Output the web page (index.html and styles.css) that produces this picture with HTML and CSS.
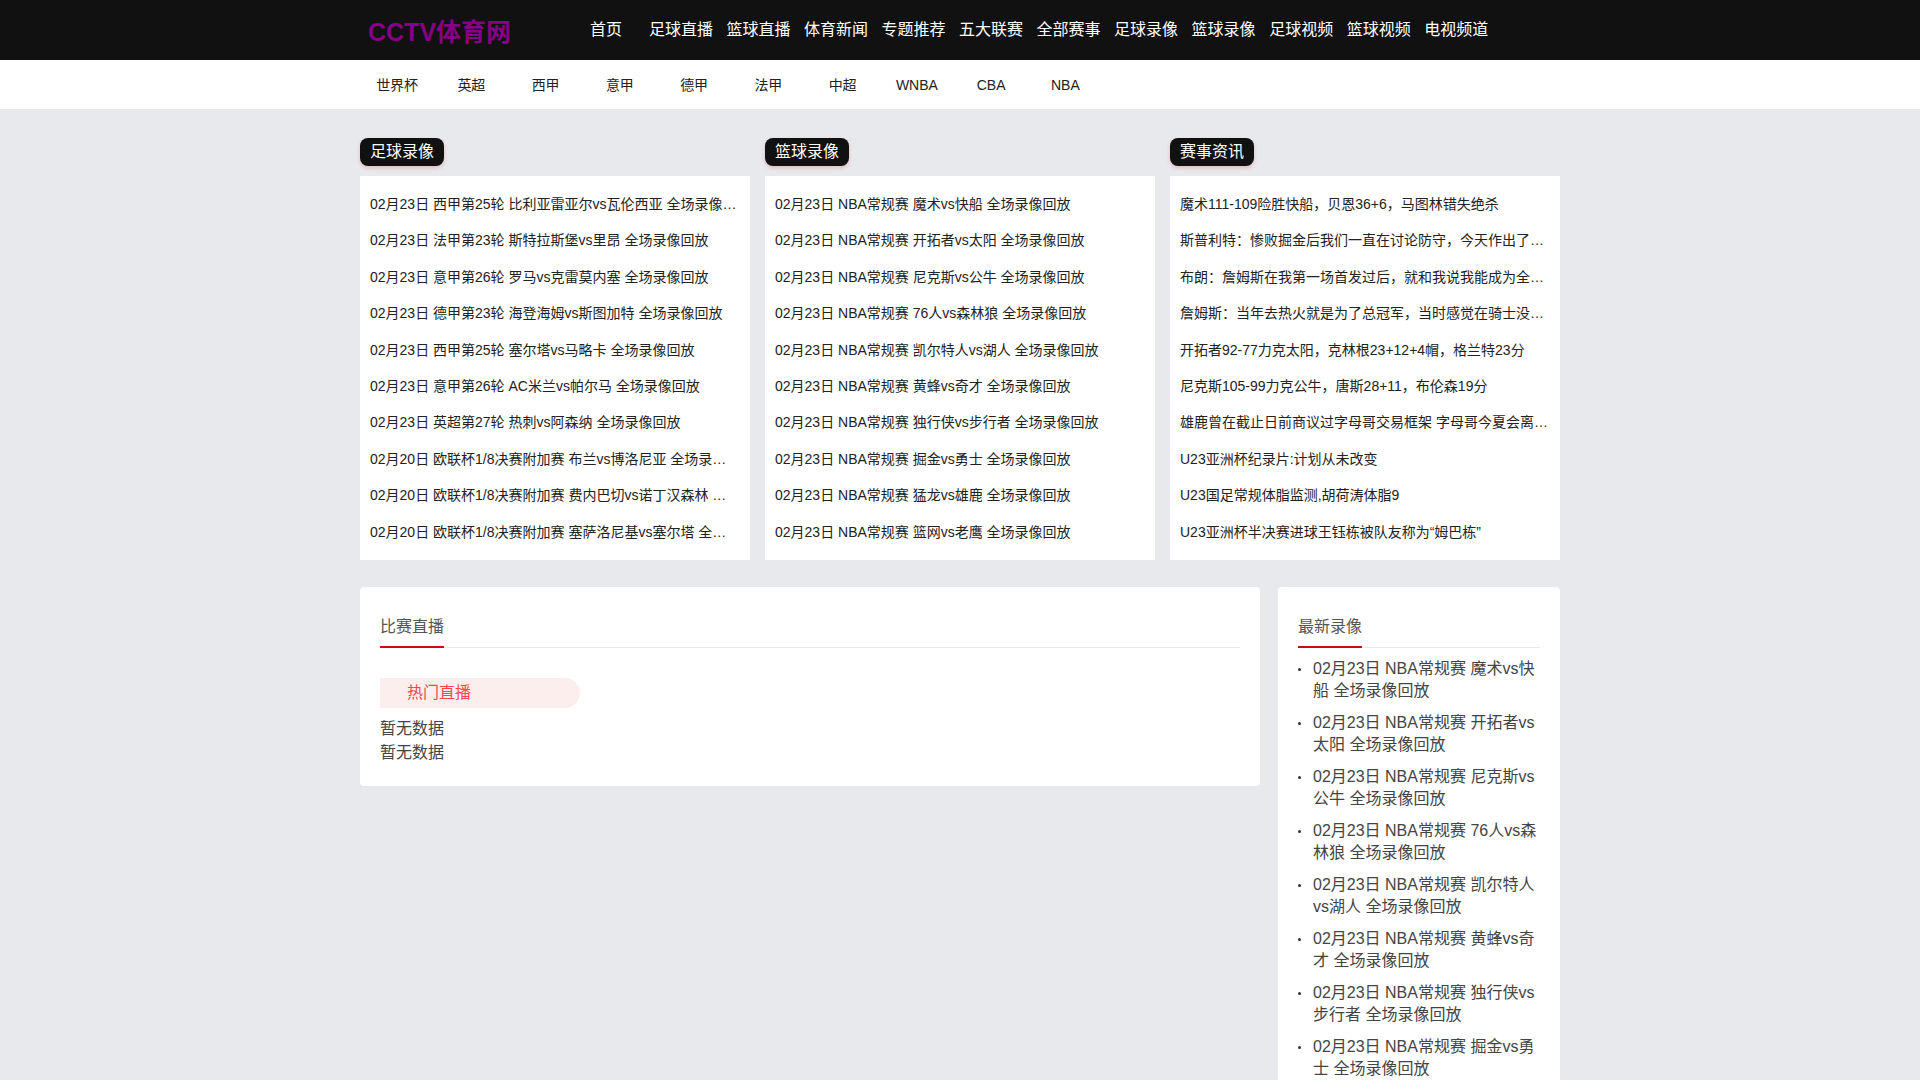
FILE: index.html
```html
<!DOCTYPE html>
<html lang="zh-CN">
<head>
<meta charset="utf-8">
<title>CCTV体育网</title>
<link rel="stylesheet" href="styles.css">
</head>
<body>
<header class="topbar">
  <div class="wrap topbar-in">
    <a class="logo">CCTV体育网</a>
    <nav class="mainnav">
      <a class="home">首页</a><a>足球直播</a><a>篮球直播</a><a>体育新闻</a><a>专题推荐</a><a>五大联赛</a><a>全部赛事</a><a>足球录像</a><a>篮球录像</a><a>足球视频</a><a>篮球视频</a><a>电视频道</a>
    </nav>
  </div>
</header>
<div class="subbar">
  <nav class="wrap subnav">
    <a>世界杯</a><a>英超</a><a>西甲</a><a>意甲</a><a>德甲</a><a>法甲</a><a>中超</a><a>WNBA</a><a>CBA</a><a>NBA</a>
  </nav>
</div>
<main class="wrap">
  <section class="columns">
    <div class="col">
      <h2 class="pill">足球录像</h2>
      <ul class="panel">
        <li>02月23日 西甲第25轮 比利亚雷亚尔vs瓦伦西亚 全场录像回放</li>
        <li>02月23日 法甲第23轮 斯特拉斯堡vs里昂 全场录像回放</li>
        <li>02月23日 意甲第26轮 罗马vs克雷莫内塞 全场录像回放</li>
        <li>02月23日 德甲第23轮 海登海姆vs斯图加特 全场录像回放</li>
        <li>02月23日 西甲第25轮 塞尔塔vs马略卡 全场录像回放</li>
        <li>02月23日 意甲第26轮 AC米兰vs帕尔马 全场录像回放</li>
        <li>02月23日 英超第27轮 热刺vs阿森纳 全场录像回放</li>
        <li class="tight">02月20日 欧联杯1/8决赛附加赛 布兰vs博洛尼亚 全场录像回放</li>
        <li class="tight">02月20日 欧联杯1/8决赛附加赛 费内巴切vs诺丁汉森林 全场录像回放</li>
        <li class="tight">02月20日 欧联杯1/8决赛附加赛 塞萨洛尼基vs塞尔塔 全场录像回放</li>
      </ul>
    </div>
    <div class="col">
      <h2 class="pill">篮球录像</h2>
      <ul class="panel">
        <li>02月23日 NBA常规赛 魔术vs快船 全场录像回放</li>
        <li>02月23日 NBA常规赛 开拓者vs太阳 全场录像回放</li>
        <li>02月23日 NBA常规赛 尼克斯vs公牛 全场录像回放</li>
        <li>02月23日 NBA常规赛 76人vs森林狼 全场录像回放</li>
        <li>02月23日 NBA常规赛 凯尔特人vs湖人 全场录像回放</li>
        <li>02月23日 NBA常规赛 黄蜂vs奇才 全场录像回放</li>
        <li>02月23日 NBA常规赛 独行侠vs步行者 全场录像回放</li>
        <li>02月23日 NBA常规赛 掘金vs勇士 全场录像回放</li>
        <li>02月23日 NBA常规赛 猛龙vs雄鹿 全场录像回放</li>
        <li>02月23日 NBA常规赛 篮网vs老鹰 全场录像回放</li>
      </ul>
    </div>
    <div class="col">
      <h2 class="pill">赛事资讯</h2>
      <ul class="panel">
        <li>魔术111-109险胜快船，贝恩36+6，马图林错失绝杀</li>
        <li>斯普利特：惨败掘金后我们一直在讨论防守，今天作出了很好的回应</li>
        <li>布朗：詹姆斯在我第一场首发过后，就和我说我能成为全明星球员</li>
        <li>詹姆斯：当年去热火就是为了总冠军，当时感觉在骑士没有机会</li>
        <li>开拓者92-77力克太阳，克林根23+12+4帽，格兰特23分</li>
        <li>尼克斯105-99力克公牛，唐斯28+11，布伦森19分</li>
        <li>雄鹿曾在截止日前商议过字母哥交易框架 字母哥今夏会离队吗</li>
        <li>U23亚洲杯纪录片:计划从未改变</li>
        <li>U23国足常规体脂监测,胡荷涛体脂9</li>
        <li>U23亚洲杯半决赛进球王钰栋被队友称为“姆巴栋”</li>
      </ul>
    </div>
  </section>
  <section class="lower">
    <div class="card live">
      <div class="card-head"><h3>比赛直播</h3></div>
      <div class="tab">热门直播</div>
      <p class="empty">暂无数据</p>
      <p class="empty">暂无数据</p>
    </div>
    <aside class="card latest">
      <div class="card-head"><h3>最新录像</h3></div>
      <ul class="bullets">
        <li>02月23日 NBA常规赛 魔术vs快船 全场录像回放</li>
        <li>02月23日 NBA常规赛 开拓者vs太阳 全场录像回放</li>
        <li>02月23日 NBA常规赛 尼克斯vs公牛 全场录像回放</li>
        <li>02月23日 NBA常规赛 76人vs森林狼 全场录像回放</li>
        <li>02月23日 NBA常规赛 凯尔特人vs湖人 全场录像回放</li>
        <li>02月23日 NBA常规赛 黄蜂vs奇才 全场录像回放</li>
        <li>02月23日 NBA常规赛 独行侠vs步行者 全场录像回放</li>
        <li>02月23日 NBA常规赛 掘金vs勇士 全场录像回放</li>
        <li>02月23日 NBA常规赛 猛龙vs雄鹿 全场录像回放</li>
        <li>02月23日 NBA常规赛 篮网vs老鹰 全场录像回放</li>
      </ul>
    </aside>
  </section>
</main>
</body>
</html>
```
FILE: styles.css
```css
* { box-sizing: border-box; }
html, body { margin: 0; padding: 0; }
body {
  background: #e8e9ed;
  color: #333;
  font-family: "Liberation Sans", "Noto Sans CJK SC", sans-serif;
  font-size: 14px;
}
ul { list-style: none; margin: 0; padding: 0; }
h2, h3, p { margin: 0; font-weight: 400; }
.wrap { width: 1200px; margin: 0 auto; }

.topbar { background: #111; height: 60px; }
.topbar-in { display: flex; align-items: center; height: 60px; }
.logo {
  width: 230px;
  padding-left: 8px;
  color: #850085;
  font-size: 25px;
  font-weight: 700;
  white-space: nowrap;
}
.mainnav { display: flex; gap: 13.5px; }
.mainnav a { color: #fff; font-size: 16px; line-height: 60px; white-space: nowrap; }
.mainnav .home { width: 45.5px; }

.subbar { background: #fff; height: 49px; }
.subnav { display: flex; }
.subnav a { width: 74.25px; text-align: center; color: #222; font-size: 14px; line-height: 50px; }

.columns { display: flex; gap: 15px; padding-top: 29px; }
.col { width: 390px; }
.pill {
  display: inline-block;
  height: 28px;
  padding: 0 10px;
  border-radius: 8px;
  background: #111;
  color: #fff;
  font-size: 16px;
  line-height: 27px;
  box-shadow: 0 2px 4px rgba(204, 0, 0, .2);
  vertical-align: top;
}
.panel { background: #fff; margin-top: 10px; padding: 10px 10px 0; height: 384px; }
.panel li {
  height: 36.4px;
  line-height: 36.4px;
  color: #222;
  white-space: nowrap;
  overflow: hidden;
  text-overflow: ellipsis;
}
.panel li.tight { padding-right: 10px; }

.lower { display: flex; justify-content: space-between; align-items: flex-start; margin-top: 27px; }
.card { background: #fff; border-radius: 4px; padding: 20px; }
.live { width: 900px; height: 199px; }
.latest { width: 282px; padding-right: 20px; }
.card-head { border-bottom: 1px solid #e8e9ed; height: 41px; }
.card-head h3 {
  display: inline-block;
  height: 41px;
  padding-right: 0;
  color: #555;
  font-size: 16px;
  line-height: 40px;
  border-bottom: 2px solid #c90c0c;
}
.tab {
  width: 200px;
  height: 30px;
  margin-top: 30px;
  padding-left: 27px;
  background: #fdeeee;
  border-radius: 0 15px 15px 0;
  color: #f5474c;
  font-size: 16px;
  line-height: 30px;
}
.empty { font-size: 16px; line-height: 24px; color: #444; }
.tab + .empty { margin-top: 9px; }
.bullets { margin-top: 10px; }
.bullets li {
  position: relative;
  padding-left: 15px;
  margin-bottom: 10px;
  font-size: 16px;
  line-height: 22px;
  color: #444;
}
.bullets li::before {
  content: "";
  position: absolute;
  left: 0;
  top: 10px;
  width: 3px;
  height: 3px;
  border-radius: 50%;
  background: #333;
}
```
